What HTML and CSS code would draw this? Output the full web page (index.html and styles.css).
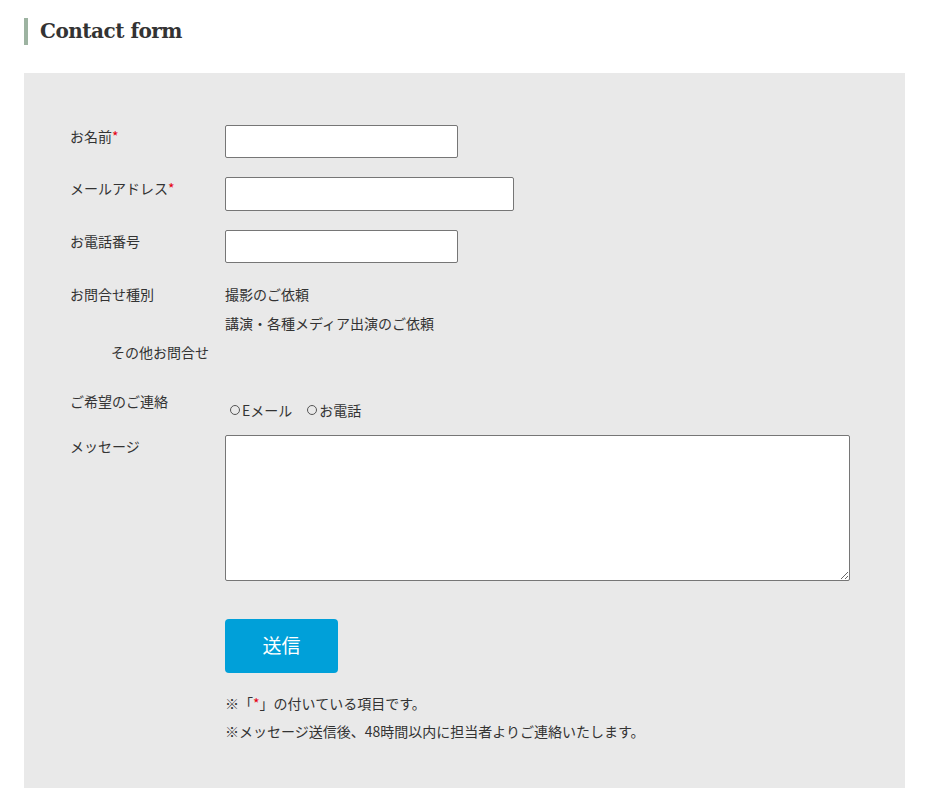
FILE: index.html
```html
<!DOCTYPE html>
<html lang="ja">
<head>
<meta charset="utf-8">
<title>Contact form</title>
<link rel="stylesheet" href="styles.css">
</head>
<body>
<div class="page">
  <h2 class="heading">Contact form</h2>
  <form class="form">
    <div class="row row-input">
      <div class="label">お名前<span class="req">*</span></div>
      <input class="field field-s" type="text">
    </div>
    <div class="row row-input">
      <div class="label">メールアドレス<span class="req">*</span></div>
      <input class="field field-m" type="text">
    </div>
    <div class="row row-input">
      <div class="label">お電話番号</div>
      <input class="field field-s" type="text">
    </div>
    <div class="row row-type">
      <div class="label">お問合せ種別</div>
      <div class="options">
        <div>撮影のご依頼</div>
        <div>講演・各種メディア出演のご依頼</div>
      </div>
    </div>
    <div class="other">その他お問合せ</div>
    <div class="row row-radio">
      <div class="label">ご希望のご連絡</div>
      <div class="radios">
        <span class="radio"><span class="dot"></span>Eメール</span>
        <span class="radio"><span class="dot"></span>お電話</span>
      </div>
    </div>
    <div class="row row-msg">
      <div class="label">メッセージ</div>
      <textarea class="area"></textarea>
    </div>
    <div class="actions">
      <button type="button" class="submit">送信</button>
      <p class="note">※「<span class="req">*</span>」の付いている項目です。</p>
      <p class="note">※メッセージ送信後、48時間以内に担当者よりご連絡いたします。</p>
    </div>
  </form>
</div>
</body>
</html>
```

FILE: styles.css
```css
* { box-sizing: border-box; }
html, body { margin: 0; padding: 0; background: #fff; }
body {
  font-family: "Noto Sans CJK JP", "Noto Sans", sans-serif;
  color: #333;
  font-size: 14px;
}
.page { padding: 18px 20px 15px 24px; }
.heading {
  margin: 0 0 28px 0;
  border-left: 4px solid #9db3a1;
  padding-left: 12px;
  font-family: "DejaVu Serif", "Liberation Serif", serif;
  font-weight: bold;
  font-size: 20px;
  line-height: 27px;
  color: #333;
  letter-spacing: -0.5px;
}
.form {
  background: #e9e9e9;
  width: 881px;
  padding: 52px 46px 43px 46px;
}
.row { display: flex; align-items: flex-start; }
.label {
  width: 155px;
  flex: none;
  line-height: 20px;
}
.req { color: #e60012; }
.row-input + .row-input { margin-top: 19px; }
.row-input .label { padding-top: 1px; }
.field {
  display: block;
  height: 33px;
  border: 1px solid #767676;
  border-radius: 2px;
  background: #fff;
  margin: 0;
}
.field-s { width: 233px; }
.field-m { width: 289px; height: 34px; }
.row-type { margin-top: 17px; }
.row-type .label, .options { line-height: 29px; }
.other { line-height: 29px; padding-left: 41px; }
.row-radio { margin-top: 24px; }
.radios { padding-top: 9px; line-height: 20px; display: flex; gap: 10px; }
.radio { display: inline-flex; align-items: center; }
.dot {
  width: 10px; height: 10px;
  border: 1px solid #555;
  border-radius: 50%;
  margin: 0 2px 0 5px;
  display: inline-block;
}
.row-msg { margin-top: 15px; }
.row-msg .label { padding-top: 1px; }
.area {
  display: block;
  width: 625px;
  height: 146px;
  border: 1px solid #767676;
  border-radius: 2px;
  background: #fff;
  margin: 0;
}
.actions { margin-left: 155px; }
.submit {
  display: block;
  margin-top: 38px;
  width: 113px;
  height: 54px;
  border: none;
  border-radius: 4px;
  background: #00a0d9;
  color: #fff;
  font-family: "Noto Sans CJK JP", sans-serif;
  font-size: 19px;
  padding: 0 0 3px 0;
}
.note { margin: 0; line-height: 28px; }
.submit + .note { margin-top: 16px; }
```
